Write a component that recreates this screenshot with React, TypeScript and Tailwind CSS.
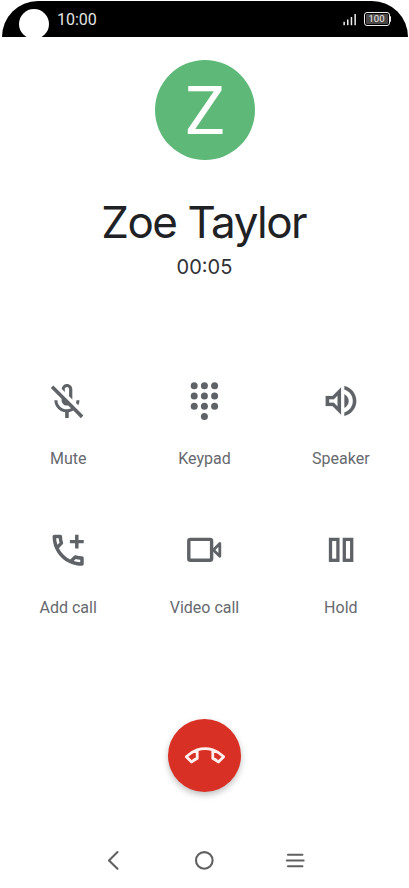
import type { ReactNode } from 'react';

function Action({ label, children }: { label: string; children: ReactNode }) {
  return (
    <button className="flex h-[149px] flex-col items-center">
      <svg width="40" height="40" viewBox="0 0 40 40" fill="#5f6368" overflow="visible">
        {children}
      </svg>
      <span className="mt-[27px] text-[16px] leading-6 text-[#66696e]">{label}</span>
    </button>
  );
}

function MuteIcon() {
  return (
    <path
      transform="translate(-2.6 0.4) scale(1.795)"
      d="M10.8 4.9c0-.66.54-1.2 1.2-1.2s1.2.54 1.2 1.2l-.01 3.91L15 10.6V5c0-1.660-1.340-3-3-3-1.540 0-2.790 1.160-2.960 2.650l1.760 1.760V4.900zM19 11h-1.700c0 .58-.1 1.130-.27 1.640l1.270 1.270c.44-.88.7-1.870.7-2.910zM4.410 2.860 3 4.270l6 6V11c0 1.660 1.340 3 3 3 .23 0 .44-.03.65-.08l1.660 1.660c-.71.33-1.500.52-2.310.52-2.760 0-5.300-2.100-5.300-5.100H5c0 3.410 2.720 6.230 6 6.720V21h2v-3.280c.91-.13 1.770-.45 2.550-.9l4.200 4.200 1.410-1.410L4.410 2.860z"
    />
  );
}

function KeypadIcon() {
  const dots = [
    [10.2, 5.7], [20.4, 5.7], [30.6, 5.7],
    [10.2, 15.9], [20.4, 15.9], [30.6, 15.9],
    [10.2, 26.2], [20.4, 26.2], [30.6, 26.2],
    [20.4, 36.5],
  ];
  return (
    <>
      {dots.map(([x, y]) => (
        <circle key={`${x}-${y}`} cx={x} cy={y} r="3.5" />
      ))}
    </>
  );
}

function SpeakerIcon() {
  return (
    <path
      transform="translate(-0.4 0.6) scale(1.7)"
      d="M3 9v6h4l5 5V4L7 9H3zm7-.17v6.34L7.830 13H5v-2h2.830L10 8.830zM16.500 12c0-1.770-1.020-3.290-2.500-4.030v8.050c1.480-.73 2.500-2.250 2.500-4.020zM14 3.230v2.060c2.890.86 5 3.540 5 6.710s-2.110 5.850-5 6.710v2.060c4.010-.91 7-4.490 7-8.770s-2.990-7.860-7-8.770z"
      stroke="#5f6368"
      strokeWidth="0.1"
    />
  );
}

function AddCallIcon() {
  return (
    <path
      transform="translate(-0.6 0.5) scale(1.73)"
      d="M20 15.500c-1.250 0-2.450-.2-3.570-.57-.1-.03-.21-.05-.31-.05-.26 0-.51.1-.71.29l-2.200 2.200c-2.830-1.440-5.150-3.750-6.590-6.590l2.200-2.200c.28-.26.36-.65.25-1C8.700 6.450 8.500 5.250 8.500 4c0-.55-.45-1-1-1H4c-.55 0-1 .45-1 1 0 9.390 7.610 17 17 17 .55 0 1-.45 1-1v-3.490c0-.55-.45-1-1-1zM5.030 5h1.500c.07.88.22 1.750.46 2.590L5.790 8.800c-.41-1.210-.67-2.480-.76-3.800zM19 18.970c-1.320-.09-2.600-.35-3.800-.76l1.200-1.200c.85.24 1.710.39 2.590.45v1.510zM18 6V3h-2v3h-3v2h3v3h2V8h3V6z"
    />
  );
}

function VideoIcon() {
  return (
    <g fill="none" stroke="#5f6368" strokeLinejoin="round">
      <rect x="4.800" y="10.400" width="22.800" height="20.900" rx="1.600" strokeWidth="3.400" />
      <path d="m29.400 20.900 6.400-6.400v12.800l-6.400-6.400Z" strokeWidth="2.800" />
    </g>
  );
}

function HoldIcon() {
  return (
    <g fill="none" stroke="#5f6368" strokeWidth="3.300">
      <rect x="9.500" y="10.400" width="7.400" height="20.900" />
      <rect x="23.300" y="10.400" width="7.400" height="20.900" />
    </g>
  );
}

function StatusBar() {
  return (
    <header className="bg-white pt-px">
      <div className="mx-[1.5px] flex h-9 items-center justify-between rounded-t-[36px] bg-black pr-[16.5px] pl-[17.5px]">
        <div className="flex h-full items-start overflow-hidden">
          <div className="mt-2 size-[30px] rounded-full bg-white" />
          <span className="mt-[9px] ml-[8px] text-[16px] leading-5 text-[#e4e4e4]">10:00</span>
        </div>
        <div className="mb-[1px] flex items-center gap-[7px]">
          <svg width="14" height="14" viewBox="0 0 14 14" fill="#eee">
            <rect x="0.400" y="9.800" width="1.500" height="3.400" />
            <rect x="4" y="7.500" width="1.500" height="5.700" />
            <rect x="7.700" y="5" width="1.500" height="8.200" />
            <rect x="11.400" y="2" width="1.500" height="11.200" />
          </svg>
          <div className="flex items-center">
            <div className="flex h-[14px] w-[26px] items-center justify-center rounded-[3px] border border-[#eee] bg-black p-px">
              <span className="flex h-full w-full items-center justify-center rounded-[1px] bg-[#4c4848] text-[9.500px] leading-none text-[#eee]">100</span>
            </div>
            <div className="h-[6px] w-[1.500px] rounded-r-sm bg-[#eee]" />
          </div>
        </div>
      </div>
    </header>
  );
}

export default function App() {
  return (
    <main className="flex h-[888px] w-[409px] flex-col overflow-hidden bg-white font-['Roboto',sans-serif]">
      <StatusBar />
      <section className="flex flex-col items-center pt-[23px]">
        <svg width="102" height="100" viewBox="0 0 102 100">
          <circle cx="51" cy="50" r="50" fill="#5eb878" />
          <text x="51" y="74" textAnchor="middle" fill="#fff" className="text-[67px]">Z</text>
        </svg>
        <h1 className="mt-[35px] pr-[1.5px] whitespace-nowrap font-['Inter',sans-serif] text-[44px] leading-[54px] tracking-[-1.5px] text-[#202124]">
          Zoe Taylor
        </h1>
        <p className="mt-[6px] font-['Inter',sans-serif] text-[20px] leading-6 text-[#303134]">00:05</p>
      </section>
      <section className="mt-[101px] grid grid-cols-3">
        <Action label="Mute"><MuteIcon /></Action>
        <Action label="Keypad"><KeypadIcon /></Action>
        <Action label="Speaker"><SpeakerIcon /></Action>
        <Action label="Add call"><AddCallIcon /></Action>
        <Action label="Video call"><VideoIcon /></Action>
        <Action label="Hold"><HoldIcon /></Action>
      </section>
      <button className="mt-[41.4px] flex size-[73px] shrink-0 items-center justify-center self-center rounded-full bg-[#d93025] pb-[2px] shadow-[0_3px_6px_rgba(0,0,0,0.25)]">
        <svg width="42" height="20" viewBox="0 0 42 20" fill="none" stroke="#fff0ed" strokeWidth="2.800" strokeLinejoin="round">
          <path d="M13.200 4.800C9 6.200 5.500 8.600 2.300 11.700L7.600 17c1.800-1.500 3.600-2.700 5.600-3.600ZM28.800 4.800c4.200 1.400 7.700 3.800 10.900 6.900L34.400 17c-1.800-1.500-3.600-2.700-5.600-3.600ZM13.200 4.800c5.100-1.500 10.500-1.500 15.600 0" />
        </svg>
      </button>
      <nav className="mt-[55.600px] flex items-center justify-center gap-[67px] pr-px">
        <svg width="24" height="24" viewBox="0 0 24 24" fill="none" stroke="#606060" strokeWidth="2.100" strokeLinecap="round" strokeLinejoin="round">
          <path d="M16.500 4 8 12.400l8.500 8.400" />
        </svg>
        <svg width="24" height="24" viewBox="0 0 24 24" fill="none" stroke="#606060" strokeWidth="2.100">
          <circle cx="12.300" cy="12.400" r="8.300" />
        </svg>
        <svg width="24" height="24" viewBox="0 0 24 24" fill="none" stroke="#606060" strokeWidth="2.100" strokeLinecap="round">
          <path d="M5 6.800h14.400M3.800 12.500h16.800M5 18.300h14.400" />
        </svg>
      </nav>
    </main>
  );
}
